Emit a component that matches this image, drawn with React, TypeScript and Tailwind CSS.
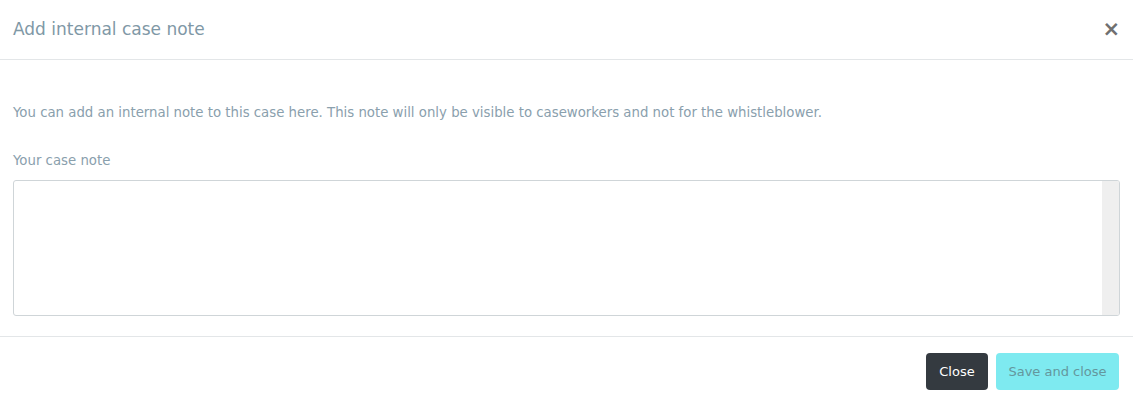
import React, { useState } from "react";

export default function App() {
  const [note, setNote] = useState("");

  return (
    <div className="w-[1133px] h-[404px] bg-white text-[#8a9fab]" style={{ fontFamily: '"DejaVu Sans", sans-serif' }}>
      {/* header */}
      <div className="h-[60px] flex items-center justify-between pl-[13px] pr-[13px] border-b border-[#e3e6e8]">
        <h2 className="text-[17px] text-[#7f98a6]">Add internal case note</h2>
        <button type="button" className="text-[#707070] text-[21px] font-bold leading-none">
          ×
        </button>
      </div>

      {/* body */}
      <div className="px-[13px] pt-[43px] pb-[20px] border-b border-[#e3e6e8]">
        <p className="text-[13.3px] text-[#8aa0ad]">
          You can add an internal note to this case here. This note will only be visible to caseworkers and not for the whistleblower.
        </p>
        <label className="block mt-[28px] text-[13.3px] text-[#8aa0ad]">Your case note</label>
        <div className="mt-[9px] h-[136px] flex border border-[#cfd5d8] rounded-[3px] overflow-hidden">
          <textarea
            value={note}
            onChange={(e) => setNote(e.target.value)}
            className="flex-1 resize-none outline-none p-2 text-[13px]"
          />
          <div className="w-[17px] bg-[#efefef]" />
        </div>
      </div>

      {/* footer */}
      <div className="flex justify-end gap-2 pr-[14px] pt-[16px]">
        <button type="button" className="h-[37px] w-[62px] rounded-[4px] bg-[#343a40] text-white text-[13px]">
          Close
        </button>
        <button type="button" className="h-[37px] w-[123px] rounded-[4px] bg-[#7eeaf0] text-[#64979d] text-[13px]">
          Save and close
        </button>
      </div>
    </div>
  );
}
